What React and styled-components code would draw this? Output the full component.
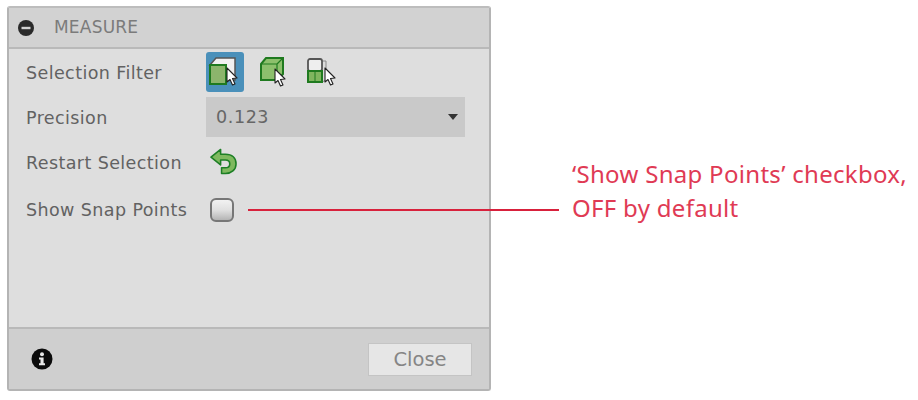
import React from "react";
import styled, { createGlobalStyle } from "styled-components";

const Global = createGlobalStyle`
  html, body { margin: 0; padding: 0; background: #fff; }
  body { width: 918px; height: 400px; overflow: hidden; font-family: "DejaVu Sans", sans-serif; }
`;

const Page = styled.div`
  position: relative;
  width: 918px;
  height: 400px;
  padding: 6px 0 0 7px;
  box-sizing: border-box;
`;

const Panel = styled.div`
  width: 484px;
  height: 385px;
  box-sizing: border-box;
  display: flex;
  flex-direction: column;
  background: #dedede;
  border: 2px solid #b4b4b4;
  border-top-color: #bdbdbd;
  border-radius: 3px;
`;

const Header = styled.div`
  height: 39px;
  box-sizing: content-box;
  flex: none;
  display: flex;
  align-items: center;
  gap: 20px;
  padding-left: 9px;
  background: #d2d2d2;
  border-bottom: 2px solid #b9b9b9;
  color: #7b7b7b;
  font-size: 17px;
  letter-spacing: 0.2px;
`;

const HeaderTitle = styled.span`
  margin-bottom: 2px;
`;

const Body = styled.div`
  flex: 1;
  display: flex;
  flex-direction: column;
  padding: 0 0 0 17px;
`;

const Row = styled.div`
  height: ${(p) => p.$h}px;
  display: grid;
  grid-template-columns: 180px 1fr;
  align-items: center;
`;

const Label = styled.div`
  color: #626262;
  font-size: 17.5px;
  letter-spacing: 0.4px;
  white-space: nowrap;
  padding-top: 2px;
`;

const Icons = styled.div`
  display: flex;
  align-items: center;
  gap: 10px;
`;

const IconSlot = styled.div`
  width: 38px;
  height: 40px;
  display: flex;
  align-items: center;
  justify-content: center;
  border-radius: 3px;
  background: ${(p) => (p.$active ? "#4a90ba" : "transparent")};
`;

const Select = styled.div`
  width: 259px;
  height: 40px;
  box-sizing: border-box;
  display: flex;
  align-items: center;
  justify-content: space-between;
  padding: 0 7px 0 10px;
  background: #c9c9c9;
  color: #666;
  font-size: 17.5px;
  letter-spacing: 0.6px;
`;

const Caret = styled.span`
  width: 0;
  height: 0;
  border-left: 5px solid transparent;
  border-right: 5px solid transparent;
  border-top: 6px solid #333;
`;

const RestartSlot = styled.div`
  display: flex;
  padding: 0 0 2px 4px;
`;

const Checkbox = styled.div`
  width: 24px;
  height: 24px;
  margin: 1px 0 0 4px;
  box-sizing: border-box;
  border: 2px solid #777;
  border-radius: 6px;
  background: linear-gradient(#f2f2f2, #e0e0e0 50%, #b4b4b4);
`;

const Footer = styled.div`
  height: 60px;
  flex: none;
  display: flex;
  align-items: center;
  justify-content: space-between;
  padding: 0 17px 0 22px;
  background: #cfcfcf;
  border-top: 2px solid #b9b9b9;
`;

const CloseButton = styled.button`
  width: 104px;
  height: 33px;
  padding: 1px 0 0;
  border: 1px solid #c4c4c4;
  background: #e6e6e6;
  color: #858585;
  font: 19.5px "DejaVu Sans", sans-serif;
`;

const Leader = styled.div`
  position: absolute;
  left: 248px;
  top: 209px;
  width: 311px;
  height: 2px;
  background: #d8213c;
`;

const Note = styled.div`
  position: absolute;
  left: 572px;
  top: 157px;
  color: #e03a54;
  font: 24px/34px "Noto Sans", sans-serif;
  letter-spacing: 0.3px;
  white-space: nowrap;
`;

const Minus = () => (
  <svg width="16" height="16" viewBox="0 0 16 16">
    <circle cx="8" cy="8" r="8" fill="#2a2a2a" />
    <rect x="3.5" y="6.8" width="9" height="2.4" fill="#d2d2d2" />
  </svg>
);

const Pointer = ({ x, y }) => (
  <path
    transform={`translate(${x} ${y})`}
    d="M0 0 V14 L3 11.5 L5.5 17 L8 16 L5.5 10.5 L10 10 Z"
    fill="#fff"
    stroke="#222"
    strokeWidth="1.1"
    strokeLinejoin="round"
  />
);

const FaceIcon = () => (
  <svg width="34" height="32" viewBox="0 0 34 32">
    <path d="M2 9 L8 2 H27 V24 H18 V9 Z" fill="#f0f0f0" stroke="#555" strokeWidth="1.5" />
    <rect x="2" y="9" width="16" height="19" fill="#8cb56c" stroke="#1f7a1f" strokeWidth="2" />
    <Pointer x={19} y={12} />
  </svg>
);

const BodyIcon = () => (
  <svg width="34" height="32" viewBox="0 0 34 32">
    <path d="M5 8 L10 2 H27 V18 L21 24 H5 Z" fill="#8cc06c" stroke="#1f7a1f" strokeWidth="2" />
    <path d="M5 8 H21 V24 M21 8 L27 2" fill="none" stroke="#1f7a1f" strokeWidth="1.2" />
    <Pointer x={19} y={13} />
  </svg>
);

const ComponentIcon = () => (
  <svg width="34" height="32" viewBox="0 0 34 32">
    <path d="M18 5 L22 5 V24 L18 26" fill="#dcdcdc" stroke="#888" strokeWidth="1" />
    <rect x="4" y="3" width="14" height="12" rx="2" fill="#eee" stroke="#555" strokeWidth="1.8" />
    <rect x="4" y="15" width="14" height="11" fill="#7fb55e" stroke="#1f7a1f" strokeWidth="2" />
    <path d="M11 15 V26" stroke="#1f7a1f" strokeWidth="1" />
    <Pointer x={21} y={12} />
  </svg>
);

const RestartIcon = () => (
  <svg width="27" height="27" viewBox="0 0 28 27">
    <path
      d="M1 9 L11 1 V6 H16 C23 6 27 10 27 16 C27 22 22 26 16 26 H12 V20 H16 C18.5 20 20.5 18.5 20.5 16 C20.5 13.5 18.5 12 16 12 H11 V17 Z"
      fill="#7fb95f"
      stroke="#1d7f25"
      strokeWidth="1.6"
      strokeLinejoin="round"
    />
  </svg>
);

const Info = () => (
  <svg width="22" height="22" viewBox="0 0 22 22">
    <circle cx="11" cy="11" r="10.5" fill="#0c0c0c" />
    <circle cx="11" cy="6.2" r="2" fill="#e8e8e8" />
    <path d="M8 9.5 H12.6 V15.2 H14 V17.2 H8 V15.2 H9.5 V11.5 H8 Z" fill="#e8e8e8" />
  </svg>
);

export default function App() {
  return (
    <Page>
      <Global />
      <Panel>
        <Header>
          <Minus />
          <HeaderTitle>MEASURE</HeaderTitle>
        </Header>
        <Body>
          <Row $h={46}>
            <Label>Selection Filter</Label>
            <Icons>
              <IconSlot $active><FaceIcon /></IconSlot>
              <IconSlot><BodyIcon /></IconSlot>
              <IconSlot><ComponentIcon /></IconSlot>
            </Icons>
          </Row>
          <Row $h={44}>
            <Label>Precision</Label>
            <Select>
              <span>0.123</span>
              <Caret />
            </Select>
          </Row>
          <Row $h={46}>
            <Label>Restart Selection</Label>
            <RestartSlot><RestartIcon /></RestartSlot>
          </Row>
          <Row $h={48}>
            <Label>Show Snap Points</Label>
            <Checkbox />
          </Row>
        </Body>
        <Footer>
          <Info />
          <CloseButton>Close</CloseButton>
        </Footer>
      </Panel>
      <Leader />
      <Note>
        ‘Show Snap Points’ checkbox,
        <br />
        OFF by default
      </Note>
    </Page>
  );
}
